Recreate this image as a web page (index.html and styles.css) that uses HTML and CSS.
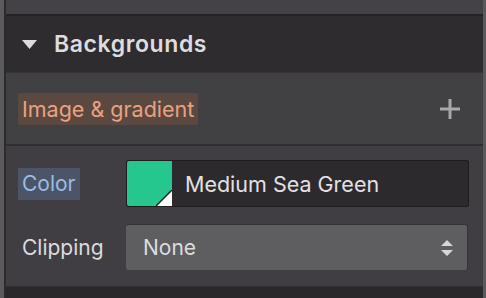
FILE: index.html
```html
<!DOCTYPE html>
<html>
<head>
<meta charset="utf-8">
<link rel="stylesheet" href="styles.css">
</head>
<body>
<div class="frame">
  <div class="edge-left"></div>
  <div class="panel">
    <div class="top"></div>
    <div class="header">
      <svg class="caret" width="15" height="9" viewBox="0 0 15 9"><path d="M0 0H15L7.5 9Z" fill="#dcdcdc"/></svg>
      <span class="title">Backgrounds</span>
    </div>
    <div class="row-image">
      <span class="tag-image">Image &amp; gradient</span>
      <svg class="plus" width="20" height="20" viewBox="0 0 20 20"><path d="M8.5 0h3v8.5H20v3h-8.5V20h-3v-8.5H0v-3h8.5z" fill="#a8a7aa"/></svg>
    </div>
    <div class="props">
      <div class="prop">
        <div class="label-cell"><span class="label label-color">Color</span></div>
        <div class="color-input">
          <span class="swatch"><svg class="corner" width="16" height="16" viewBox="0 0 16 16"><path d="M16 0V16H0Z" fill="#ffffff"/><path d="M16 0L0 16" stroke="#1c1a1d" stroke-width="1.4"/></svg></span>
          <span class="color-name">Medium Sea Green</span>
        </div>
      </div>
      <div class="prop">
        <div class="label-cell"><span class="label">Clipping</span></div>
        <div class="select">
          <span class="select-value">None</span>
          <svg class="arrows" width="12" height="16" viewBox="0 0 12 16"><path d="M6 0L12 6H0Z M0 10H12L6 16Z" fill="#d6d5d8"/></svg>
        </div>
      </div>
    </div>
    <div class="bottom"></div>
  </div>
  <div class="edge-right"></div>
</div>
</body>
</html>
```

FILE: styles.css
```css
html, body {
  margin: 0;
  padding: 0;
  background: #403e42;
}
body {
  font-family: Inter, "Noto Sans", sans-serif;
  width: 486px;
  height: 298px;
  overflow: hidden;
}
.frame {
  display: flex;
  height: 298px;
}
.edge-left {
  width: 4px;
  background: #5b5a5d;
  border-right: 2px solid #2c2a2d;
}
.edge-right {
  width: 3px;
  background: #5a595c;
}
.panel {
  flex: 1;
  display: flex;
  flex-direction: column;
  background: #403e42;
}
.top {
  height: 14px;
  background: #444246;
  border-bottom: 2px solid #242225;
}
.header {
  height: 56px;
  background: #2e2c2f;
  border-bottom: 1px solid #363437;
  display: flex;
  align-items: center;
  padding-left: 16px;
}
.caret {
  margin-right: 17px;
  margin-top: 1px;
}
.title {
  color: #dddcdf;
  font-size: 23px;
  font-weight: 600;
  letter-spacing: 0.6px;
}
.row-image {
  height: 71px;
  display: flex;
  align-items: center;
  justify-content: space-between;
  padding: 0 23px 0 12px;
  border-bottom: 2px solid #2f2d30;
  background: #414043;
}
.tag-image {
  background: #5a4841;
  color: #e9a27f;
  font-size: 21.5px;
  padding: 4px 4px 4px 4px;
  border-radius: 2px;
  line-height: 24px;
}
.props {
  display: flex;
  flex-direction: column;
  gap: 17px;
  padding: 14px 14px 0 12px;
  flex: 1;
}
.prop {
  display: flex;
  align-items: center;
}
.label-cell {
  width: 108px;
  flex: none;
}
.label {
  color: #dcdbde;
  font-size: 21px;
  padding-left: 4px;
}
.label-color {
  display: inline-block;
  color: #9dbbe3;
  background: #4b5567;
  padding: 4px 4px 4px 4px;
  line-height: 24px;
}
.color-input {
  flex: 1;
  height: 45px;
  display: flex;
  align-items: center;
  background: #2c2a2d;
  border: 1px solid #1e1c1f;
  border-radius: 2px;
}
.swatch {
  width: 45px;
  height: 45px;
  background: #26c68f;
  position: relative;
  border-radius: 2px 0 0 2px;
}
.corner {
  position: absolute;
  right: 0;
  bottom: 0;
}
.color-name {
  color: #e2e1e4;
  font-size: 21.5px;
  margin-left: 13px;
}
.select {
  flex: 1;
  height: 45px;
  display: flex;
  align-items: center;
  justify-content: space-between;
  background: #5e5d60;
  border-top: 1px solid #353336;
  border-right: 1px solid #353336;
  border-radius: 3px;
  padding: 0 14px 0 17px;
  margin-right: 1px;
}
.select-value {
  color: #dddcdf;
  font-size: 21px;
}
.arrows {
  margin-top: 1px;
}
.bottom {
  height: 11px;
  background: #2a282b;
  border-top: 1px solid #323033;
}
```
